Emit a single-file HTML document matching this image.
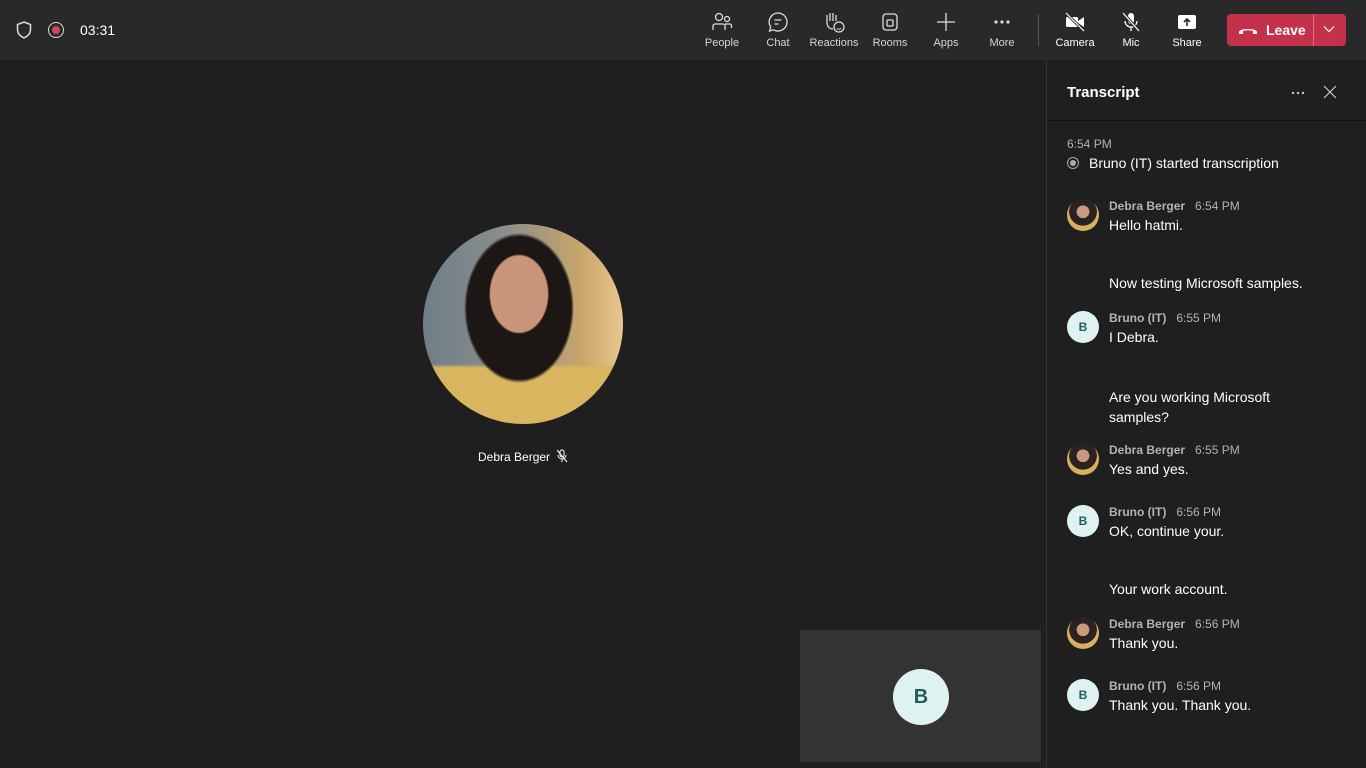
<!DOCTYPE html><html><head><style>
*{margin:0;padding:0;box-sizing:border-box}
body{width:1366px;height:768px;background:#1f1f1f;font-family:"Liberation Sans",sans-serif;color:#fff;position:relative;overflow:hidden}
.top{position:absolute;left:0;top:0;width:1366px;height:60px;background:#292929}
.a{position:absolute;white-space:nowrap}
.btn{position:absolute;top:10px;width:56px;text-align:center;font-size:11px;color:#d6d6d6}
.btn svg{display:block;margin:0 auto 3px;height:24px}
.panel{position:absolute;left:1046px;top:60px;width:320px;height:708px;background:#1f1f1f;border-left:1px solid #333}
.nm{font-size:12px;color:#b3b3b3;font-weight:bold}
.tm{font-size:12px;color:#b3b3b3;margin-left:10px}
.tx{font-size:14px;color:#fff}
.av{position:absolute;left:1067px;width:32px;height:32px;border-radius:50%}
.b{background:#dff2f2;color:#1f5c5c;font-size:12px;font-weight:bold;text-align:center;line-height:32px}
.d{background:radial-gradient(circle at 50% 40%,#c89a80 0 25%,#2a2320 26% 55%,#d8b060 56%)}
</style></head><body>
<div class="top"></div>
<svg class="a" style="left:16px;top:21px" width="16" height="18" viewBox="0 0 16 18"><path d="M8 1 L14.5 3.5 V9 C14.5 13 11 15.5 8 17 C5 15.5 1.5 13 1.5 9 V3.5 Z" fill="none" stroke="#ddd" stroke-width="1.5"/></svg>
<div class="a" style="left:48px;top:22px;width:16px;height:16px;border-radius:50%;border:1.5px solid #ddd"></div>
<div class="a" style="left:52px;top:26px;width:8px;height:8px;border-radius:50%;background:#d1485e"></div>
<div class="a" style="left:80px;top:22px;font-size:14px">03:31</div>
<div class="btn" style="left:694px"><svg viewBox="0 0 24 24" width="24"><circle cx="9" cy="7" r="3.5" fill="none" stroke="#ddd" stroke-width="1.3"/><circle cx="17" cy="9" r="2.5" fill="none" stroke="#ddd" stroke-width="1.3"/><path d="M3 20v-4a2 2 0 0 1 2-2h8a2 2 0 0 1 2 2v4M15 14h5a1.5 1.5 0 0 1 1.5 1.5V18" fill="none" stroke="#ddd" stroke-width="1.3"/></svg>People</div>
<div class="btn" style="left:750px"><svg viewBox="0 0 24 24" width="24"><path d="M12 3a9 9 0 1 1-4.5 16.8L3.5 21l1.2-4A9 9 0 0 1 12 3z" fill="none" stroke="#ddd" stroke-width="1.3"/><path d="M8.5 10h7M8.5 14h4" stroke="#ddd" stroke-width="1.3"/></svg>Chat</div>
<div class="btn" style="left:806px"><svg viewBox="0 0 24 24" width="24"><path d="M5 12V5m3 6V3m3 8V3m3 8V5M5 12c0 4 2 7 6 7" fill="none" stroke="#ddd" stroke-width="1.3"/><circle cx="17" cy="17" r="5" fill="#292929" stroke="#ddd" stroke-width="1.3"/><path d="M15 18.5q2 1.5 4 0" fill="none" stroke="#ddd"/></svg>Reactions</div>
<div class="btn" style="left:862px"><svg viewBox="0 0 24 24" width="24"><rect x="5" y="4" width="14" height="16" rx="3" fill="none" stroke="#ddd" stroke-width="1.3"/><rect x="9" y="10" width="6" height="6" rx="1" fill="none" stroke="#ddd" stroke-width="1.3"/></svg>Rooms</div>
<div class="btn" style="left:918px"><svg viewBox="0 0 24 24" width="24"><path d="M12 3v18M3 12h18" stroke="#ddd" stroke-width="1.3"/></svg>Apps</div>
<div class="btn" style="left:974px"><svg viewBox="0 0 24 24" width="24"><circle cx="6" cy="12" r="1.6" fill="#ddd"/><circle cx="12" cy="12" r="1.6" fill="#ddd"/><circle cx="18" cy="12" r="1.6" fill="#ddd"/></svg>More</div>
<div class="a" style="left:1038px;top:14px;width:1px;height:32px;background:#555"></div>
<div class="btn" style="left:1047px;color:#fff"><svg viewBox="0 0 24 24" width="24"><rect x="3" y="7" width="12" height="10" rx="1.5" fill="#fff"/><path d="M15 11l6-4v10l-6-4z" fill="#fff"/><path d="M3 3l18 18" stroke="#292929" stroke-width="3"/><path d="M3 3l18 18" stroke="#fff" stroke-width="1.2"/></svg>Camera</div>
<div class="btn" style="left:1103px;color:#fff"><svg viewBox="0 0 24 24" width="24"><rect x="9" y="3" width="6" height="11" rx="3" fill="#fff"/><path d="M6 11a6 6 0 0 0 12 0M12 17v4" fill="none" stroke="#fff" stroke-width="1.3"/><path d="M4 3l16 18" stroke="#292929" stroke-width="3"/><path d="M4 3l16 18" stroke="#fff" stroke-width="1.2"/></svg>Mic</div>
<div class="btn" style="left:1159px;color:#fff"><svg viewBox="0 0 24 24" width="24"><rect x="3" y="5" width="18" height="14" rx="2" fill="#fff"/><path d="M12 16V9m-3 3l3-3 3 3" fill="none" stroke="#292929" stroke-width="1.6"/></svg>Share</div>
<div class="a" style="left:1227px;top:14px;width:119px;height:32px;background:#c4314b;border-radius:4px"></div>
<div class="a" style="left:1313px;top:14px;width:1px;height:32px;background:#e56b80"></div>
<svg class="a" style="left:1238px;top:24px" width="20" height="12" viewBox="0 0 20 12"><path d="M1 8c0-4 18-4 18 0v2h-4V7c-3-1-7-1-10 0v3H1z" fill="#fff"/></svg>
<div class="a" style="left:1266px;top:22px;font-size:14px;font-weight:bold">Leave</div>
<svg class="a" style="left:1323px;top:25px" width="12" height="8" viewBox="0 0 12 8"><path d="M1 1.5l5 5 5-5" fill="none" stroke="#fff" stroke-width="1.2"/></svg>

<div class="a" style="left:423px;top:224px;width:200px;height:200px;border-radius:50%;background:radial-gradient(ellipse 30px 40px at 48% 35%,#c8957a 0 95%,transparent 100%),radial-gradient(ellipse 55px 75px at 48% 42%,#1c1614 0 95%,transparent 100%),linear-gradient(180deg,transparent 70%,#d9b560 72%),linear-gradient(90deg,#6e7e88 0,#8a8e8c 40%,#c9a66a 80%,#e8c890 100%)"></div>
<div class="a" style="left:478px;top:450px;font-size:12px">Debra Berger</div>
<svg class="a" style="left:556px;top:449px" width="12" height="14" viewBox="0 0 12 14"><rect x="4" y="1" width="4" height="7" rx="2" fill="none" stroke="#fff"/><path d="M2 6a4 4 0 0 0 8 0M6 10v3M1 1l10 12" fill="none" stroke="#fff"/></svg>

<div class="a" style="left:800px;top:630px;width:241px;height:132px;background:#333"></div>
<div class="a b" style="left:893px;top:669px;width:56px;height:56px;border-radius:50%;line-height:56px;font-size:20px">B</div>

<div class="panel"></div>
<div class="a" style="left:1067px;top:84px;font-size:15px;font-weight:bold">Transcript</div>
<svg class="a" style="left:1290px;top:86px" width="16" height="14"><circle cx="3" cy="7" r="1.2" fill="#ccc"/><circle cx="8" cy="7" r="1.2" fill="#ccc"/><circle cx="13" cy="7" r="1.2" fill="#ccc"/></svg>
<svg class="a" style="left:1323px;top:85px" width="14" height="14"><path d="M1 1l12 12M13 1L1 13" stroke="#ccc" stroke-width="1.2"/></svg>
<div class="a" style="left:1047px;top:120px;width:319px;height:1px;background:#111"></div>
<div class="a" style="left:1067px;top:137px;font-size:12px;color:#b3b3b3">6:54 PM</div>
<div class="a" style="left:1067px;top:157px;width:12px;height:12px;border-radius:50%;border:1.5px solid #aaa"></div>
<div class="a" style="left:1070px;top:160px;width:6px;height:6px;border-radius:50%;background:#aaa"></div>
<div class="a tx" style="left:1089px;top:155px">Bruno (IT) started transcription</div>

<div class="av d" style="top:199px"></div><div class="a" style="left:1109px;top:197px"><span class="nm">Debra Berger</span><span class="tm">6:54 PM</span></div>
<div class="a tx" style="left:1109px;top:217px">Hello hatmi.</div>
<div class="a tx" style="left:1109px;top:275px">Now testing Microsoft samples.</div>
<div class="av b" style="top:311px">B</div><div class="a" style="left:1109px;top:309px"><span class="nm">Bruno (IT)</span><span class="tm">6:55 PM</span></div>
<div class="a tx" style="left:1109px;top:329px">I Debra.</div>
<div class="a tx" style="left:1109px;top:387px;line-height:20px">Are you working Microsoft<br>samples?</div>
<div class="av d" style="top:443px"></div><div class="a" style="left:1109px;top:441px"><span class="nm">Debra Berger</span><span class="tm">6:55 PM</span></div>
<div class="a tx" style="left:1109px;top:461px">Yes and yes.</div>
<div class="av b" style="top:505px">B</div><div class="a" style="left:1109px;top:503px"><span class="nm">Bruno (IT)</span><span class="tm">6:56 PM</span></div>
<div class="a tx" style="left:1109px;top:523px">OK, continue your.</div>
<div class="a tx" style="left:1109px;top:581px">Your work account.</div>
<div class="av d" style="top:617px"></div><div class="a" style="left:1109px;top:615px"><span class="nm">Debra Berger</span><span class="tm">6:56 PM</span></div>
<div class="a tx" style="left:1109px;top:635px">Thank you.</div>
<div class="av b" style="top:679px">B</div><div class="a" style="left:1109px;top:677px"><span class="nm">Bruno (IT)</span><span class="tm">6:56 PM</span></div>
<div class="a tx" style="left:1109px;top:697px">Thank you. Thank you.</div>
</body></html>
